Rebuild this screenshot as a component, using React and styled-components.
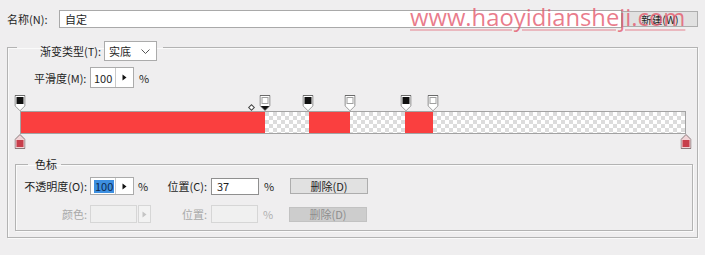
import React from 'react'
import styled, { createGlobalStyle } from 'styled-components'

const GlobalStyle = createGlobalStyle`
html, body {
  margin: 0;
  padding: 0;
  background: #efeeef;
}
body {
  font-family: "Noto Sans CJK SC", "Noto Sans", sans-serif;
  font-size: 11px;
  color: #1e1e1e;
}
* { box-sizing: border-box; }
`

const opacityStops = [
    { pos: 0, opaque: true },
    { pos: 36.8, opaque: false, selected: true },
    { pos: 43.3, opaque: true },
    { pos: 49.6, opaque: false },
    { pos: 57.9, opaque: true },
    { pos: 62, opaque: false },
]

const colorStops = [{ pos: 0 }, { pos: 100 }]

const RED = '#fa3f3f'

// solid spans between an opaque stop and the next clear one
const barFill = () => {
    const parts = []
    for (let i = 0; i < opacityStops.length - 1; i++) {
        const a = opacityStops[i].pos
        const b = opacityStops[i + 1].pos
        const c = opacityStops[i].opaque ? RED : 'transparent'
        parts.push(`${c} ${a}%`, `${c} ${b}%`)
    }
    parts.push(`transparent ${opacityStops[opacityStops.length - 1].pos}%`, 'transparent 100%')
    return `linear-gradient(to right, ${parts.join(', ')})`
}

const TopStop = ({ opaque, selected }) => (
    <svg width="11" height="16" viewBox="0 0 11 16">
        <path d="M0.5 0.5H10.5V10.5L5.5 15.5L0.5 10.5Z" fill="#fff" stroke="#6a6a6a" />
        <path d="M1.2 11H9.8L5.5 15.2Z" fill={selected ? '#111' : '#fff'} />
        <rect x="2.5" y="2.5" width="6" height="6" fill={opaque ? '#111' : '#fff'} stroke={opaque ? '#111' : '#a0a0a0'} />
    </svg>
)

const BottomStop = () => (
    <svg width="11" height="15" viewBox="0 0 11 15">
        <path d="M0.5 14.5V5.5L5.5 0.5L10.5 5.5V14.5Z" fill="#f1d3d6" stroke="#8a7a7c" />
        <rect x="2" y="6" width="7" height="7" fill="#c73e4b" />
    </svg>
)

const Arrow = ({ disabled }) => (
    <svg width="5" height="7" viewBox="0 0 5 7">
        <path d="M0.5 0.5L4.5 3.5L0.5 6.5Z" fill={disabled ? '#c4c4c4' : '#111'} />
    </svg>
)

const SpinBox = ({ value, selected, h }) => (
    <Spin $h={h}>
        <SpinValue>{selected ? <Selected>{value}</Selected> : value}</SpinValue>
        <SpinButton><Arrow /></SpinButton>
    </Spin>
)

const App = () => {
    return (
        <Page>
            <GlobalStyle />
            <NameRow>
                <Label $w={52}>名称(N):</Label>
                <NameInput>自定</NameInput>
                <NewButton>新建(W)</NewButton>
                <Watermark>www.haoyidiansheji.com</Watermark>
            </NameRow>

            <Outer>
                <OuterLegend>
                    <LegendInner>
                        <Label $w={64}>渐变类型(T):</Label>
                        <Select>
                            实底
                            <svg width="9" height="5" viewBox="0 0 9 5">
                                <path d="M0.5 0.5L4.5 4.5L8.5 0.5" fill="none" stroke="#555" />
                            </svg>
                        </Select>
                    </LegendInner>
                </OuterLegend>

                <SmoothRow>
                    <Label $w={55}>平滑度(M):</Label>
                    <SpinBox value="100" h={21} />
                    <Pct $ml={5}>%</Pct>
                </SmoothRow>

                <Editor>
                    <Track $h={16}>
                        {opacityStops.map((s, i) => (
                            <StopSlot key={i} style={{ left: `${s.pos}%` }}>
                                <TopStop opaque={s.opaque} selected={s.selected} />
                            </StopSlot>
                        ))}
                        <Midpoint style={{ left: '34.9%' }} />
                    </Track>
                    <Bar $fill={barFill()} />
                    <Track $h={15}>
                        {colorStops.map((s, i) => (
                            <StopSlot key={i} style={{ left: `${s.pos}%` }}>
                                <BottomStop />
                            </StopSlot>
                        ))}
                    </Track>
                </Editor>

                <StopsBox>
                    <StopsLegend>色标</StopsLegend>
                    <StopRow>
                        <Label $w={67} $right>不透明度(O):</Label>
                        <SpinBox value="100" selected h={18} />
                        <Pct $ml={4}>%</Pct>
                        <Label $w={59} $right>位置(C):</Label>
                        <Field $ml={2} $w={48}>37</Field>
                        <Pct $ml={5}>%</Pct>
                        <Button $ml={14}>删除(D)</Button>
                    </StopRow>
                    <StopRow $mt={10}>
                        <Label $w={68} $right $pr={3} $disabled>颜色:</Label>
                        <Swatch />
                        <SwatchButton><Arrow disabled /></SwatchButton>
                        <Label $w={58} $right $disabled>位置:</Label>
                        <Field $ml={2} $w={47} $disabled />
                        <Pct $ml={5} $disabled>%</Pct>
                        <Button $ml={14} $disabled>删除(D)</Button>
                    </StopRow>
                </StopsBox>
            </Outer>
        </Page>
    )
}

export default App

const Page = styled.div`
width:705px;
height:255px;
overflow:hidden;
`

const NameRow = styled.div`
position:relative;
display:flex;
align-items:center;
height:18px;
margin-top:10px;
padding:0 7px;
`

const Label = styled.span`
flex:none;
width:${p => p.$w}px;
padding-right:${p => (p.$pr ?? 2)}px;
text-align:${p => (p.$right ? 'right' : 'left')};
white-space:nowrap;
color:${p => (p.$disabled ? '#a9a9a9' : '#1e1e1e')};
`

const NameInput = styled.div`
flex:1;
height:18px;
line-height:16px;
padding-left:5px;
background:#fff;
border:1px solid #a9a9a9;
`

const NewButton = styled.div`
flex:none;
width:76px;
height:16px;
display:flex;
align-items:center;
justify-content:center;
font-size:10.5px;
background:#e1e1e1;
border:1px solid #adadad;
`

const Watermark = styled.span`
position:absolute;
left:410px;
top:-5px;
font-family:"Open Sans", "Noto Sans", sans-serif;
font-size:23.8px;
line-height:24px;
color:rgba(228, 88, 108, 0.78);
text-decoration:underline;
text-decoration-color:rgba(226, 82, 102, 0.35);
text-underline-offset:3px;
white-space:nowrap;
`

const Outer = styled.fieldset`
margin:5px 7px 0;
padding:0 0 6px;
min-width:0;
border:1px solid #b3b3b3;
box-shadow:1px 1px 0 #fafafa, inset 1px 1px 0 #fafafa;
`

const OuterLegend = styled.legend`
margin-left:9px;
padding:8px 6px 0 0;
`

const LegendInner = styled.div`
display:flex;
align-items:center;
height:20px;
padding-left:23px;
`

const Select = styled.div`
width:53px;
height:20px;
display:flex;
align-items:center;
justify-content:space-between;
padding:0 6px 0 4px;
background:#fff;
border:1px solid #ababab;
`

const SmoothRow = styled.div`
display:flex;
align-items:center;
height:21px;
margin-top:6px;
padding-left:26px;
`

const Spin = styled.div`
flex:none;
display:flex;
height:${p => p.$h}px;
margin-left:1px;
background:#fff;
border:1px solid #ababab;
`

const SpinValue = styled.div`
width:25px;
display:flex;
align-items:center;
padding-left:3px;
border-right:1px solid #c9c9c9;
`

const Selected = styled.span`
background:#3d8fe0;
color:#0d2a52;
line-height:13px;
padding:0 1px;
`

const SpinButton = styled.div`
width:17px;
display:flex;
align-items:center;
justify-content:center;
`

const Pct = styled.span`
flex:none;
width:12px;
margin-left:${p => p.$ml}px;
color:${p => (p.$disabled ? '#b0b0b0' : '#1e1e1e')};
`

const Editor = styled.div`
margin:7px 11px 0 12px;
`

const Track = styled.div`
position:relative;
height:${p => p.$h}px;
`

const StopSlot = styled.div`
position:absolute;
top:0;
transform:translateX(-50%);
line-height:0;
`

const Midpoint = styled.div`
position:absolute;
top:10px;
width:5px;
height:5px;
margin-left:-3px;
border:1px solid #444;
background:#fff;
transform:rotate(45deg);
`

const Bar = styled.div`
height:23px;
border:1px solid #a3a3a3;
background-image:${p => p.$fill},
  conic-gradient(#dcdcdc 25%, #ffffff 0 50%, #dcdcdc 0 75%, #ffffff 0);
background-size:100% 100%, 8px 8px;
`

const StopsBox = styled.fieldset`
margin:7px 4px 0 7px;
padding:5px 0 7px;
min-width:0;
border:1px solid #b3b3b3;
box-shadow:1px 1px 0 #fafafa, inset 1px 1px 0 #fafafa;
`

const StopsLegend = styled.legend`
margin-left:12px;
padding:0 4px 0 7px;
line-height:16px;
`

const StopRow = styled.div`
display:flex;
align-items:center;
height:18px;
margin-top:${p => p.$mt || 0}px;
padding-left:6px;
`

const Field = styled.div`
flex:none;
width:${p => p.$w}px;
height:${p => (p.$disabled ? 18 : 17)}px;
margin-left:${p => p.$ml}px;
padding-left:5px;
line-height:15px;
background:${p => (p.$disabled ? '#f0f0f0' : '#fff')};
border:1px solid ${p => (p.$disabled ? '#d6d6d6' : '#8f8f8f')};
`

const Swatch = styled.div`
flex:none;
width:47px;
height:18px;
border:1px solid #d6d6d6;
background:#efefef;
`

const SwatchButton = styled.div`
flex:none;
width:13px;
height:18px;
margin-left:1px;
display:flex;
align-items:center;
justify-content:center;
border:1px solid #d6d6d6;
background:#f2f2f2;
`

const Button = styled.div`
flex:none;
width:78px;
height:${p => (p.$disabled ? 15 : 16)}px;
margin-left:${p => p.$ml}px;
display:flex;
align-items:center;
justify-content:center;
font-size:11px;
color:${p => (p.$disabled ? '#8e8e8e' : '#1e1e1e')};
background:${p => (p.$disabled ? '#cdcdcd' : '#e1e1e1')};
border:1px solid ${p => (p.$disabled ? '#c2c2c2' : '#adadad')};
`
